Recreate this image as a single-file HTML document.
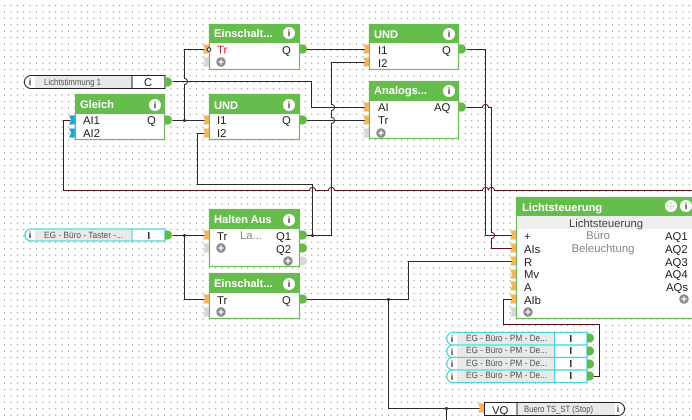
<!DOCTYPE html>
<html><head><meta charset="utf-8">
<style>
html,body{margin:0;padding:0;background:#fff;width:692px;height:420px;overflow:hidden}
svg{display:block;font-family:"Liberation Sans",sans-serif;text-rendering:geometricPrecision}
.t{fill:#fff;font-weight:bold;font-size:11.100px}
.l{fill:#1c1c1c;font-size:11.300px}
.g{fill:#888;font-size:11.300px}
.s{fill:#555;font-size:9px}
.b{fill:#66bc4c}
.box{fill:#fff;stroke:#6fbd58;stroke-width:1.200}
.w{fill:none;stroke:#2b2b2b;stroke-width:1}
.d{fill:none;stroke:#5e0f18;stroke-width:1}
.i{fill:#333;font-weight:bold;font-size:9px;text-anchor:middle}
.pl{fill:#fff;stroke:#222;stroke-width:1}
.pc{fill:#fff;stroke:#45d6d6;stroke-width:1.300}
.lb{fill:#e9e9e9}
</style></head><body>
<svg width="692" height="420" viewBox="0 0 692 420" xmlns="http://www.w3.org/2000/svg">
<defs>
<pattern id="dots" x="4" y="5" width="6.400" height="6.400" patternUnits="userSpaceOnUse"><rect width="1" height="1" fill="#777"/></pattern>
<polygon id="in" points="-6,-4.500 0,-4.500 0,4.500 -6,4.500 -4,0" fill="#f6b45e"/>
<polygon id="ing" points="-6,-4.500 0,-4.500 0,4.500 -6,4.500 -4,0" fill="#d6d6d6"/>
<polygon id="inb" points="-6,-4.500 0,-4.500 0,4.500 -6,4.500 -4,0" fill="#1fa6d6"/>
<path id="out" d="M0-4.500H3A4 4.500 0 0 1 7 0A4 4.500 0 0 1 3 4.500H0Z" fill="#62bb46"/>
<path id="outg" d="M0-4.500H3A4 4.500 0 0 1 7 0A4 4.500 0 0 1 3 4.500H0Z" fill="#d8d8d8"/>
<g id="plus"><circle r="4.700" fill="#8a8a8a"/><path d="M-2.600 0H2.600M0-2.600V2.600" stroke="#fff" stroke-width="1.300"/></g>
<circle id="ic" r="6" fill="#fff"/>
</defs>
<rect width="692" height="420" fill="url(#dots)"/>

<g transform="translate(0.5 0.5)">
<!-- dark wires -->
<path class="w" d="M172 120H204M184 120V84a3 3 0 0 0 0-6V49H204"/>
<path class="w" d="M306 49H365"/>
<path class="w" d="M306 120H365"/>
<path class="w" d="M306 235H331V123a3 3 0 0 0 0-6V110a3 3 0 0 0 0-6V62H365"/>
<path class="w" d="M312 235V184H197V133H204"/>
<path class="w" d="M172 235H204M184 235V299H204"/>
<path class="w" d="M466 49H485V235H512"/>
<path class="w" d="M306 299H408V261H512"/>
<path class="w" d="M388 299V408H479M446 408V420"/>
<!-- red wires -->
<path class="d" d="M172 81H311V107H365"/>
<path class="d" d="M70 120H63V190H309a3 3 0 0 1 6 0H328a3 3 0 0 1 6 0H482a3 3 0 0 1 6 0a3 3 0 0 1 6 0H692"/>
<path class="d" d="M466 107H482a3 3 0 0 1 6 0H491V232a3 3 0 0 1 0 6V248H512"/>
<path class="d" d="M512 299H503V324H599V376H593"/>
</g>
<circle cx="184.500" cy="120.500" r="1.500" fill="#333"/><circle cx="184.500" cy="235.500" r="1.500" fill="#333"/>
<circle cx="312.500" cy="235.500" r="1.500" fill="#333"/><circle cx="388.500" cy="299.500" r="1.500" fill="#333"/>
<circle cx="446.500" cy="408.500" r="1.500" fill="#333"/>

<!-- Lichtstimmung pill -->
<path class="pl" d="M165 75.500H31A6.500 6.500 0 0 0 31 88.500H165Z"/>
<rect class="lb" x="35" y="76" width="97" height="12"/>
<line x1="132" y1="75" x2="132" y2="88" stroke="#222"/>
<text class="i" x="30" y="85">i</text>
<text class="s" x="44" y="85" textLength="57" lengthAdjust="spacingAndGlyphs">Lichtstimmung 1</text>
<text class="l" x="144" y="86">C</text>
<use href="#out" x="165" y="82"/>

<!-- Taster pill -->
<path class="pc" d="M165 229H31A6 6 0 0 0 31 241H165Z"/>
<rect class="lb" x="35" y="230" width="97" height="10"/>
<line x1="132" y1="229" x2="132" y2="241" stroke="#45d6d6"/>
<text class="i" x="30" y="238">i</text>
<text class="s" x="44" y="238" textLength="79" lengthAdjust="spacingAndGlyphs">EG - Büro - Taster -...</text>
<rect x="148" y="232" width="1.500" height="7" fill="#333"/>
<use href="#out" x="165" y="235"/>

<!-- Gleich -->
<use href="#inb" x="75" y="120"/><use href="#inb" x="75" y="133"/>
<rect class="box" x="75.500" y="94.500" width="89" height="45"/>
<rect class="b" x="75" y="94" width="90" height="20"/>
<text class="t" x="80" y="108">Gleich</text>
<use href="#ic" x="155" y="105"/><text class="i" x="155" y="108">i</text>
<text class="l" x="83" y="124">AI1</text><text class="l" x="83" y="137">AI2</text>
<text class="l" x="147" y="124">Q</text>
<use href="#out" x="165" y="120"/>

<!-- Einschalt top -->
<use href="#in" x="209" y="49"/><use href="#ing" x="209" y="62"/>
<rect class="box" x="209.500" y="24.500" width="90" height="45"/>
<rect class="b" x="209" y="24" width="91" height="19"/>
<text class="t" x="214" y="37">Einschalt...</text>
<use href="#ic" x="289" y="33"/><text class="i" x="289" y="36">i</text>
<circle cx="209" cy="49.500" r="1.800" fill="#fff" stroke="#222"/>
<text class="l" x="217" y="53.500" style="fill:#c8202a">Tr</text>
<text class="l" x="282" y="54">Q</text>
<use href="#plus" x="221" y="62"/>
<use href="#out" x="300" y="49"/>

<!-- UND mid -->
<use href="#in" x="209" y="120"/><use href="#in" x="209" y="133"/>
<rect class="box" x="209.500" y="94.500" width="90" height="45"/>
<rect class="b" x="209" y="94" width="91" height="20"/>
<text class="t" x="214" y="109">UND</text>
<use href="#ic" x="289" y="105"/><text class="i" x="289" y="108">i</text>
<text class="l" x="217" y="124">I1</text><text class="l" x="217" y="137">I2</text>
<text class="l" x="282" y="124">Q</text>
<use href="#out" x="300" y="120"/>

<!-- UND top right -->
<use href="#in" x="369" y="49"/><use href="#in" x="369" y="62"/>
<rect class="box" x="369.500" y="24.500" width="89" height="45"/>
<rect class="b" x="369" y="24" width="90" height="19"/>
<text class="t" x="374" y="38">UND</text>
<use href="#ic" x="449" y="34"/><text class="i" x="449" y="37">i</text>
<text class="l" x="378" y="54">I1</text><text class="l" x="378" y="67">I2</text>
<text class="l" x="442" y="54">Q</text>
<use href="#out" x="459" y="49"/>

<!-- Analogs -->
<use href="#in" x="369" y="107"/><use href="#in" x="369" y="120"/><use href="#ing" x="369" y="133"/>
<rect class="box" x="369.500" y="81.500" width="89" height="57"/>
<rect class="b" x="369" y="81" width="90" height="20"/>
<text class="t" x="374" y="94">Analogs...</text>
<use href="#ic" x="449" y="91"/><text class="i" x="449" y="94">i</text>
<text class="l" x="378" y="111">AI</text><text class="l" x="378" y="124">Tr</text>
<text class="l" x="434" y="111">AQ</text>
<use href="#plus" x="381" y="133"/>
<use href="#out" x="459" y="107"/>

<!-- Halten Aus -->
<use href="#in" x="209" y="235"/><use href="#ing" x="209" y="248"/>
<rect class="box" x="209.500" y="209.500" width="90" height="57"/>
<rect class="b" x="209" y="209" width="91" height="20"/>
<text class="t" x="214" y="223">Halten Aus</text>
<use href="#ic" x="289" y="220"/><text class="i" x="289" y="223">i</text>
<text class="l" x="217" y="240">Tr</text>
<text class="g" x="240" y="239">La...</text>
<text class="l" x="276" y="240">Q1</text><text class="l" x="276" y="253">Q2</text>
<use href="#plus" x="221" y="248"/><use href="#plus" x="288" y="261"/>
<use href="#out" x="300" y="235"/><use href="#out" x="300" y="248"/><use href="#outg" x="300" y="261"/>

<!-- Einschalt low -->
<use href="#in" x="209" y="299"/><use href="#ing" x="209" y="312"/>
<rect class="box" x="209.500" y="273.500" width="90" height="45"/>
<rect class="b" x="209" y="273" width="91" height="20"/>
<text class="t" x="214" y="287">Einschalt...</text>
<use href="#ic" x="289" y="284"/><text class="i" x="289" y="287">i</text>
<text class="l" x="217" y="304">Tr</text><text class="l" x="282" y="304">Q</text>
<use href="#plus" x="221" y="312"/>
<use href="#out" x="300" y="299"/>

<!-- Lichtsteuerung -->
<use href="#in" x="516" y="235"/><use href="#in" x="516" y="248"/><use href="#in" x="516" y="261"/>
<use href="#in" x="516" y="274"/><use href="#in" x="516" y="286"/><use href="#in" x="516" y="299"/><use href="#ing" x="516" y="312"/>
<rect class="box" x="516.500" y="197.500" width="190" height="121"/>
<rect class="b" x="516" y="197" width="190" height="19"/>
<rect x="517" y="216" width="175" height="13" fill="#efefef"/>
<text class="t" x="522" y="211">Lichtsteuerung</text>
<use href="#ic" x="671" y="206"/><path d="M671 202.500v7M667.500 206h7" stroke="#b5d8a8" stroke-width="1.500" stroke-dasharray="1.500 1"/>
<use href="#ic" x="686" y="206"/><text class="i" x="686" y="209">i</text>
<text class="l" x="606" y="227" text-anchor="middle" style="fill:#444">Lichtsteuerung</text>
<text class="g" x="598" y="239" text-anchor="middle">Büro</text>
<text class="g" x="603" y="252" text-anchor="middle">Beleuchtung</text>
<text class="l" x="524" y="240">+</text><text class="l" x="524" y="253">AIs</text>
<text class="l" x="524" y="266">R</text><text class="l" x="524" y="278">Mv</text>
<text class="l" x="524" y="291">A</text><text class="l" x="524" y="304">AIb</text>
<text class="l" x="665" y="240">AQ1</text><text class="l" x="665" y="253">AQ2</text>
<text class="l" x="665" y="266">AQ3</text><text class="l" x="665" y="278">AQ4</text>
<text class="l" x="666" y="291">AQs</text>
<use href="#plus" x="528" y="312"/><use href="#plus" x="684" y="299"/>

<!-- PM pills -->
<g>
<path class="pc" d="M587 332.500H453A6 6 0 0 0 453 345H587Z"/><rect class="lb" x="457" y="333" width="97" height="11"/>
<path class="pc" d="M587 345H453A6 6 0 0 0 453 357.500H587Z"/><rect class="lb" x="457" y="346" width="97" height="11"/>
<path class="pc" d="M587 357.500H453A6 6 0 0 0 453 370H587Z"/><rect class="lb" x="457" y="358" width="97" height="11"/>
<path class="pc" d="M587 370H453A6 6 0 0 0 453 382.500H587Z"/><rect class="lb" x="457" y="371" width="97" height="11"/>
<line x1="554.500" y1="332" x2="554.500" y2="383" stroke="#45d6d6"/>
<text class="i" x="452" y="342">i</text><text class="i" x="452" y="355">i</text><text class="i" x="452" y="367">i</text><text class="i" x="452" y="380">i</text>
<text class="s" x="466" y="341" textLength="81" lengthAdjust="spacingAndGlyphs">EG - Büro - PM - De...</text>
<text class="s" x="466" y="353" textLength="81" lengthAdjust="spacingAndGlyphs">EG - Büro - PM - De...</text>
<text class="s" x="466" y="366" textLength="81" lengthAdjust="spacingAndGlyphs">EG - Büro - PM - De...</text>
<text class="s" x="466" y="378" textLength="81" lengthAdjust="spacingAndGlyphs">EG - Büro - PM - De...</text>
<rect x="570" y="335" width="1.500" height="7" fill="#333"/><rect x="570" y="347" width="1.500" height="7" fill="#333"/>
<rect x="570" y="360" width="1.500" height="7" fill="#333"/><rect x="570" y="372" width="1.500" height="7" fill="#333"/>
<use href="#out" x="587" y="338"/><use href="#out" x="587" y="351"/><use href="#out" x="587" y="364"/><use href="#out" x="587" y="376"/>
</g>

<!-- VQ -->
<use href="#in" x="484" y="408"/>
<path class="pl" d="M484.500 402.500H618A6.500 6.500 0 0 1 618 415.500H484.500Z"/>
<rect class="lb" x="518" y="403" width="97" height="12"/>
<line x1="517" y1="402" x2="517" y2="415" stroke="#222"/>
<text class="l" x="492" y="414">VQ</text>
<text class="s" x="524" y="412" textLength="69" lengthAdjust="spacingAndGlyphs">Buero TS_ST (Stop)</text>
<text class="i" x="618" y="412">i</text>
</svg>
</body></html>
